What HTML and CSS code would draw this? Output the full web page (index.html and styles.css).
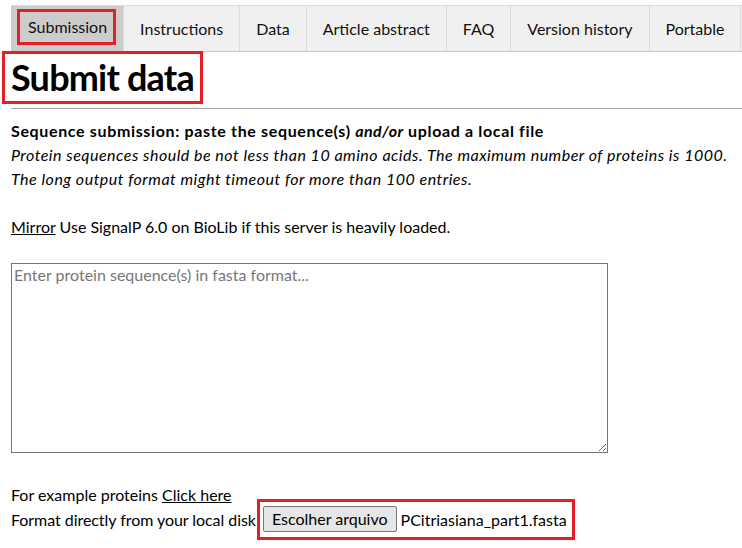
FILE: index.html
```html
<!DOCTYPE html>
<html>
<head>
<meta charset="utf-8">
<link rel="stylesheet" href="styles.css">
</head>
<body>
<div class="page">
  <nav class="tabs">
    <div class="tab active"><span class="mark">Submission</span></div>
    <div class="tab">Instructions</div>
    <div class="tab">Data</div>
    <div class="tab">Article abstract</div>
    <div class="tab">FAQ</div>
    <div class="tab">Version history</div>
    <div class="tab">Portable</div>
  </nav>
  <h1 class="title"><span class="title-box">Submit data</span></h1>
  <hr class="rule">
  <p class="lead"><b>Sequence submission: paste the sequence(s) <i>and/or</i> upload a local file</b></p>
  <p class="note">Protein sequences should be not less than 10 amino acids. The maximum number of proteins is 1000.<br>The long output format might timeout for more than 100 entries.</p>
  <p class="mirror"><a class="link" href="#">Mirror</a> Use SignalP 6.0 on BioLib if this server is heavily loaded.</p>
  <textarea class="seq" placeholder="Enter protein sequence(s) in fasta format..."></textarea>
  <div class="example">For example proteins <a class="link" href="#">Click here</a></div>
  <div class="upload"><span class="upload-label">Format directly from your local disk</span> <span class="file-box"><span class="file-btn">Escolher arquivo</span><span class="file-name">PCitriasiana_part1.fasta</span></span></div>
</div>
</body>
</html>
```

FILE: styles.css
```css
* { box-sizing: border-box; }
html, body { margin: 0; padding: 0; background: #fff; }
html { overflow: hidden; }
body {
  font-family: Lato, "Liberation Sans", sans-serif;
  font-size: 16px;
  color: #000;
  min-height: 548px;
}
.page {
  padding-left: 11px;
  padding-bottom: 20px;
  width: 760px;
}
.tabs {
  margin-top: 5px;
  display: flex;
  height: 47px;
  background: #f0f0f0;
  border-top: 1px solid #dcdcdc;
  border-bottom: 1px solid #c8c8c8;
}
.tab {
  display: flex;
  align-items: center;
  justify-content: center;
  padding: 0 16px;
  border-right: 1px solid #dcdcdc;
  font-size: 16px;
  color: #111;
  white-space: nowrap;
}
.tab.active {
  background: #cccccc;
  padding: 3px 7px 6px 6px;
  align-items: stretch;
}
.mark {
  display: flex;
  align-items: center;
  padding: 0 6px 1px 8px;
  border: 3px solid #e41e26;
}
.title {
  margin: -1px 0 0 -9px;
  height: 57px;
  font-size: 36px;
  font-weight: 700;
  line-height: 1;
}
.title-box {
  display: inline-block;
  border: 3px solid #e41e26;
  padding: 5px 6px 6px 6px;
  line-height: 36px;
  letter-spacing: -0.8px;
}
.rule {
  margin: 0;
  border: 0;
  border-top: 1px solid #a8a8a8;
}
.lead {
  margin: 10px 0 0;
  line-height: 24px;
  letter-spacing: 0.65px;
}
.lead i { letter-spacing: 0.4px; }
.note {
  margin: 0;
  font-style: italic;
  line-height: 24px;
  letter-spacing: 0.5px;
}
.mirror {
  margin: 24px 0 0;
  line-height: 24px;
}
.link {
  color: #000;
  text-decoration: underline;
}
.seq {
  display: block;
  margin-top: 24px;
  width: 597px;
  height: 190px;
  border: 1px solid #767676;
  font-family: Lato, "Liberation Sans", sans-serif;
  font-size: 16px;
  padding: 1px 2px;
  resize: both;
}
.seq::placeholder { color: #777; }
.example {
  margin-top: 30px;
  line-height: 24px;
}
.upload {
  display: flex;
  align-items: center;
  height: 24px;
  margin-top: 0;
  white-space: nowrap;
}
.upload-label {
  letter-spacing: -0.05px;
  margin-right: 1px;
}
.file-box {
  display: inline-flex;
  align-items: center;
  border: 3px solid #e41e26;
  padding: 0 5px 0 3px;
  height: 41px;
  flex: none;
}
.file-btn {
  display: inline-block;
  padding: 0 8px;
  height: 26px;
  line-height: 24px;
  background: #e6e6e6;
  border: 1px solid #767676;
  border-radius: 2px;
}
.file-name {
  margin-left: 4px;
}
```
